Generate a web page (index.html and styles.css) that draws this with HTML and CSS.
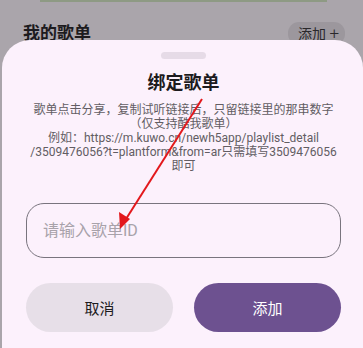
FILE: index.html
```html
<!DOCTYPE html>
<html>
<head>
    <title>绑定歌单</title>
    <link rel="stylesheet" href="styles.css">
</head>
<body>
    <div class="page">
        <div class="cover-edge"></div>
        <div class="section-head">
            <h2>我的歌单</h2>
            <span class="add-pill">添加 <span class="plus">+</span></span>
        </div>
    </div>

    <div class="sheet">
        <div class="handle"></div>
        <h1>绑定歌单</h1>
        <p class="hint">
            歌单点击分享，复制试听链接后，只留链接里的那串数字<br>
            （仅支持酷我歌单）<br>
            例如：https://m.kuwo.cn/newh5app/playlist_detail<br>
            /3509476056?t=plantform&amp;from=ar只需填写3509476056<br>
            即可
        </p>
        <input class="id-input" type="text" placeholder="请输入歌单ID">
        <div class="actions">
            <button class="btn btn-cancel">取消</button>
            <button class="btn btn-add">添加</button>
        </div>
    </div>

    <!-- annotation arrow drawn over the screenshot -->
    <svg class="arrow" width="363" height="348" viewBox="0 0 363 348">
        <line x1="202" y1="99" x2="126" y2="219" stroke="#e3181c" stroke-width="2"/>
        <polygon points="120,229 119,212 130,219" fill="#e3181c"/>
    </svg>
</body>
</html>
```

FILE: styles.css
```css
body {
    margin: 0;
    width: 363px;
    height: 348px;
    overflow: hidden;
    position: relative;
    background-color: #aaa5ab;
    font-family: Roboto, "Noto Sans CJK SC", sans-serif;
}
.page {
    padding: 0 18px 0 23px;
}
.cover-edge {
    height: 2px;
    margin: 0 18px 0 17px;
    background-color: #8e9a84;
}
.section-head {
    display: flex;
    justify-content: space-between;
    align-items: center;
    margin-top: 19px;
}
.section-head h2 {
    margin: 0;
    font-size: 17px;
    font-weight: bold;
    color: #1d1b1e;
    line-height: 24px;
}
.add-pill {
    background-color: #9c979d;
    color: #2a282b;
    font-size: 14px;
    line-height: 22px;
    padding: 0 6px 0 10px;
    border-radius: 11px;
}
.plus {
    font-size: 17px;
    font-weight: 300;
}
.sheet {
    position: absolute;
    top: 40px;
    left: 2px;
    right: 0;
    bottom: 0;
    background-color: #fcf1fc;
    border-radius: 28px 28px 0 0;
    display: flex;
    flex-direction: column;
    align-items: center;
    padding: 0 22px 0 24px;
}
.handle {
    width: 45px;
    height: 7px;
    border-radius: 4px;
    background-color: #e6dbe7;
    margin-top: 12px;
}
h1 {
    margin: 13px 0 0;
    font-size: 18px;
    line-height: 22px;
    color: #1d1b1e;
}
.hint {
    margin: 9px 0 0;
    font-size: 12px;
    line-height: 14px;
    color: #625d63;
    text-align: center;
    white-space: nowrap;
}
.id-input {
    box-sizing: border-box;
    width: 100%;
    height: 55px;
    margin-top: 30px;
    border: 1px solid #79747e;
    border-radius: 18px;
    background: transparent;
    padding: 0 16px;
    font-family: inherit;
    font-size: 16px;
    outline: none;
}
.id-input::placeholder {
    color: #a8a2aa;
}
.actions {
    display: flex;
    gap: 21px;
    width: 100%;
    margin-top: 25px;
}
.btn {
    flex: 1;
    height: 49px;
    border: none;
    border-radius: 25px;
    font-family: inherit;
    font-size: 15px;
}
.btn-cancel {
    background-color: #e7dfe8;
    color: #1d1b1e;
}
.btn-add {
    background-color: #6d5190;
    color: #ffffff;
}
.arrow {
    position: absolute;
    top: 0;
    left: 0;
}
```
